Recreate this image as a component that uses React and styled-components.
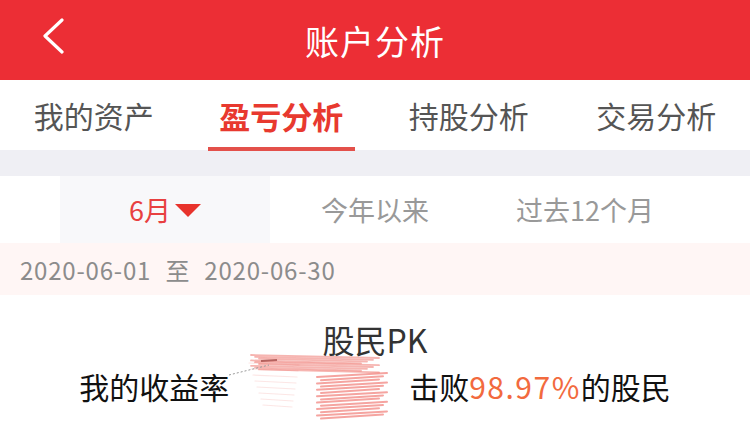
import React from 'react';
import styled, { createGlobalStyle } from 'styled-components';

const GlobalStyle = createGlobalStyle`
  body {
    margin: 0;
    background: #fff;
    font-family: 'Noto Sans CJK SC', 'Noto Sans', sans-serif;
  }
`;

const Page = styled.div`
  width: 750px;
  height: 437px;
  overflow: hidden;
  background: #fff;
`;

const Header = styled.div`
  position: relative;
  height: 80px;
  background: #ec2e35;
  display: flex;
  align-items: center;
  justify-content: center;
`;

const BackButton = styled.div`
  position: absolute;
  left: 40px;
  top: 18px;
  width: 26px;
  height: 38px;
`;

const Title = styled.div`
  color: #fff;
  font-size: 34px;
  letter-spacing: 1px;
`;

const Tabs = styled.div`
  height: 70px;
  display: grid;
  grid-template-columns: repeat(4, 1fr);
  background: #fff;
`;

const Tab = styled.div`
  position: relative;
  display: flex;
  align-items: center;
  justify-content: center;
  font-size: ${(p) => (p.active ? '31px' : '30px')};
  font-weight: ${(p) => (p.active ? 700 : 400)};
  color: ${(p) => (p.active ? '#e8392f' : '#555')};

  &::after {
    content: '';
    display: ${(p) => (p.active ? 'block' : 'none')};
    position: absolute;
    bottom: -1px;
    left: 20px;
    right: 20px;
    height: 4px;
    background: #e3504a;
  }
`;

const Gap = styled.div`
  height: 26px;
  background: #efeff4;
`;

const Filters = styled.div`
  height: 67px;
  padding: 0 60px;
  display: grid;
  grid-template-columns: repeat(3, 1fr);
`;

const Filter = styled.div`
  display: flex;
  align-items: center;
  justify-content: center;
  gap: 4px;
  font-size: 27px;
  color: ${(p) => (p.active ? '#e84040' : '#999')};
  background: ${(p) => (p.active ? '#f8f8fa' : '#fff')};
`;

const Caret = styled.span`
  width: 0;
  height: 0;
  border-left: 13px solid transparent;
  border-right: 13px solid transparent;
  border-top: 13px solid #e8332c;
  margin-top: 2px;
`;

const DateRow = styled.div`
  height: 52px;
  padding-left: 20px;
  display: flex;
  align-items: center;
  background: #fff6f5;
  color: #8c8c8c;
  font-size: 24px;
  letter-spacing: 0.8px;
  word-spacing: 8px;
`;

const Versus = styled.div`
  padding-top: 22px;
  display: flex;
  flex-direction: column;
  align-items: center;
`;

const VersusTitle = styled.div`
  font-size: 32px;
  line-height: 44px;
  color: #333;
`;

const Result = styled.div`
  display: flex;
  align-items: center;
  font-size: 30px;
  line-height: 50px;
  color: #111;
`;

const Hidden = styled.span`
  width: 180px;
  height: 50px;
  position: relative;
`;

const Scribble = styled.svg`
  position: absolute;
  left: 0;
  top: -12px;
`;

const Percent = styled.span`
  color: #f26a3e;
  letter-spacing: 1.5px;
`;

const topBand = Array.from({ length: 9 }, (_, i) => {
  const y = 6 + i * 1.8;
  return `M${22 + (i % 3) * 4} ${y} L${150 - (i % 4) * 6} ${y + 3}`;
});

const block = Array.from({ length: 14 }, (_, i) => {
  const y = 24 + i * 3.2;
  return `M${88 + (i % 2) * 4} ${y + 4} L${158 - (i % 3) * 4} ${y}`;
});

const fuzz = Array.from({ length: 8 }, (_, i) => {
  const y = 14 + i * 6;
  return `M${20 + i * 2} ${y} L${70 - i} ${y + 2}`;
});

const App = () => (
  <Page>
    <GlobalStyle />
    <Header>
      <BackButton>
        <svg width="26" height="38" viewBox="0 0 26 38">
          <path d="M22 2 L5 18 L22 34" fill="none" stroke="#fff" strokeWidth="3.2" strokeLinecap="round" strokeLinejoin="round" />
        </svg>
      </BackButton>
      <Title>账户分析</Title>
    </Header>
    <Tabs>
      <Tab>我的资产</Tab>
      <Tab active>盈亏分析</Tab>
      <Tab>持股分析</Tab>
      <Tab>交易分析</Tab>
    </Tabs>
    <Gap />
    <Filters>
      <Filter active>
        6月<Caret />
      </Filter>
      <Filter>今年以来</Filter>
      <Filter>过去12个月</Filter>
    </Filters>
    <DateRow>2020-06-01 至 2020-06-30</DateRow>
    <Versus>
      <VersusTitle>股民PK</VersusTitle>
      <Result>
        我的收益率
        <Hidden>
          <Scribble width="180" height="80" viewBox="0 0 180 80">
            <g stroke="#ec5a52" fill="none" strokeLinecap="round">
              <g strokeWidth="1.8" strokeOpacity="0.45">
                {topBand.map((d) => (
                  <path key={d} d={d} />
                ))}
              </g>
              <g strokeWidth="2" strokeOpacity="0.55">
                {block.map((d) => (
                  <path key={d} d={d} />
                ))}
              </g>
              <g strokeWidth="1.2" strokeOpacity="0.15">
                {fuzz.map((d) => (
                  <path key={d} d={d} />
                ))}
              </g>
            </g>
            <path d="M32 12 L48 11" stroke="#8a2a26" strokeWidth="2" strokeOpacity="0.6" />
            <path d="M0 26 L40 16" stroke="#999" strokeWidth="1" strokeDasharray="2 2" />
          </Scribble>
        </Hidden>
        击败<Percent>98.97%</Percent>的股民
      </Result>
    </Versus>
  </Page>
);

export default App;
